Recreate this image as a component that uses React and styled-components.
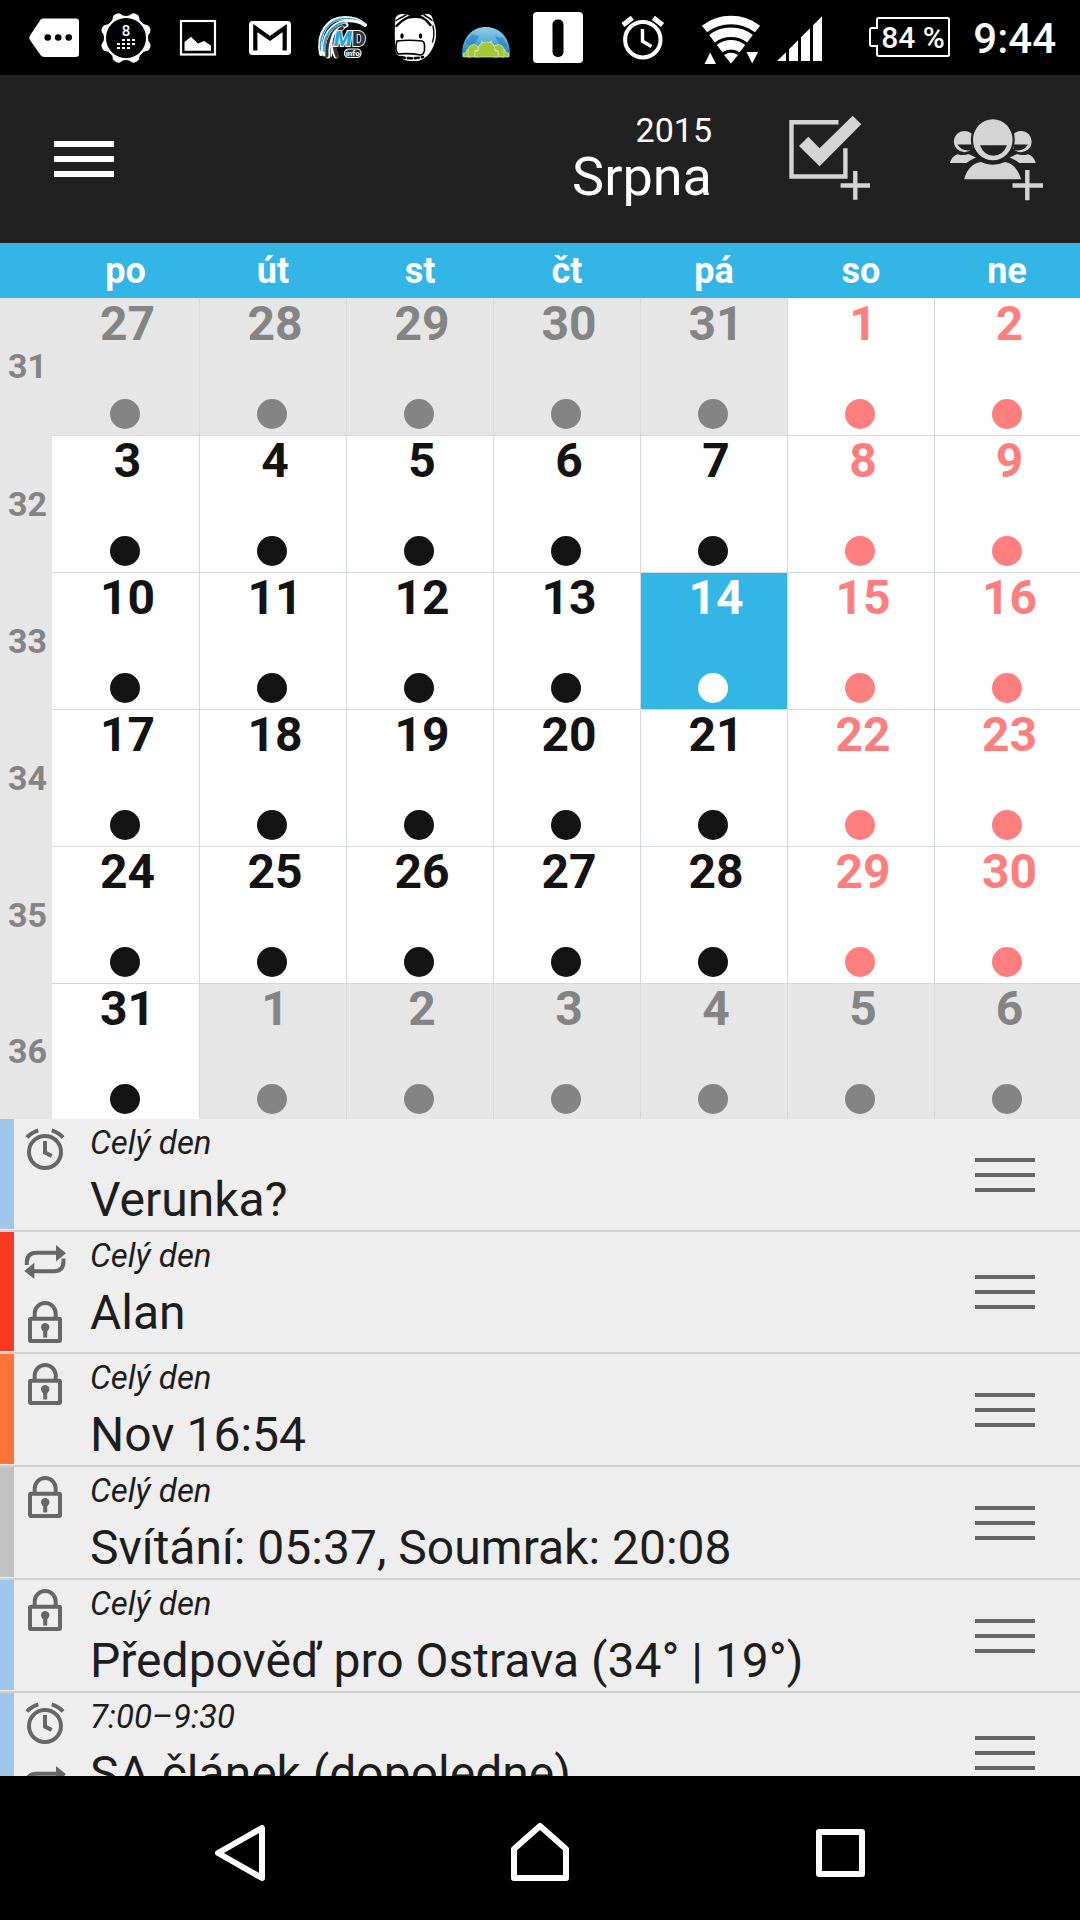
import { useState } from "react";
import styled, { createGlobalStyle } from "styled-components";

const GlobalStyle = createGlobalStyle`
    *{
        box-sizing: border-box;
    }
    body{
        margin: 0;
        background-color: #000;
        font-family: Roboto, 'Liberation Sans', sans-serif;
    }
    button{
        border: 0;
        padding: 0;
        background: none;
        font: inherit;
        color: inherit;
        cursor: pointer;
    }
    svg{
        display: block;
        flex-shrink: 0;
    }
`;

const Screen = styled.div`
    display: flex;
    flex-direction: column;
    height: 100vh;
`;

const StatusBar = styled.div`
    display: flex;
    align-items: center;
    height: 75px;
    padding: 0 24px 0 18px;
    background-color: #000;
    color: #fff;
`;
const Notifications = styled.div`
    display: flex;
    flex: 1;
`;
const Indicators = styled.div`
    display: flex;
    align-items: center;
`;
const Signals = styled.div`
    display: flex;
    margin: 0 38px 0 16px;
`;
const Clock = styled.time`
    margin-left: 22px;
    padding-top: 2px;
    font-size: 42px;
    font-weight: 500;
    line-height: 76px;
`;

const Header = styled.header`
    display: flex;
    align-items: center;
    gap: 72px;
    height: 168px;
    padding: 0 35px 4px 54px;
    background-color: #212121;
    color: #fff;
`;
const MenuButton = styled.button`
    display: flex;
    flex-direction: column;
    gap: 9px;
    width: 60px;
    margin-top: 4px;
`;
const MenuLine = styled.span`
    height: 6px;
    width: 100%;
    background-color: #fff;
`;
const MonthTitle = styled.h1`
    flex: 1;
    margin: 0;
    padding-right: 1px;
    font-size: 54px;
    font-weight: 400;
    line-height: 54px;
    text-align: right;
`;
const Year = styled.span`
    display: block;
    font-size: 34px;
    line-height: 40px;
`;
const HeaderButton = styled.button`
    color: #d4d4d4;
`;

const Calendar = styled.table`
    display: block;
    width: 100%;
`;
const Section = styled.thead`
    display: block;
`;
const WeekRow = styled.tr`
    display: grid;
    grid-template-columns: 52px 148fr repeat(5, 147fr) 145fr;
`;
const WeekDay = styled.th`
    height: 55px;
    padding: 2px 1px 0 0;
    background-color: #33b5e6;
    color: #fff;
    font-size: 36px;
    font-weight: 700;
    line-height: 53px;
    text-align: center;
`;
const WeekNumber = styled.th`
    display: flex;
    align-items: center;
    justify-content: center;
    padding: 0 0 2px 3px;
    background-color: #e6e6e6;
    color: #848484;
    font-size: 34px;
    font-weight: 700;
`;
const colors = {
    out: "#848484",
    work: "#131313",
    weekend: "#ff7f7f",
    selected: "#fff",
};
const DayCell = styled.td`
    padding: 0;
    color: ${p => colors[p.$kind]};
    background-color: ${p => p.$kind === "selected" ? "#33b5e6" : p.$kind === "out" ? "#e6e6e6" : "#fff"};
    border-right: 1px solid #d5dad8;
    border-bottom: 1px solid #d5dad8;
    &:last-child{
        border-right: 0;
    }
    tr:first-child > &{
        padding-top: 1px;
    }
    tr:last-child > &{
        border-bottom: 0;
    }
`;
const DayButton = styled.button`
    display: flex;
    flex-direction: column;
    align-items: center;
    gap: 50px;
    width: 100%;
    padding: 0 2px 6px 0;
    tr:last-child &{
        padding-bottom: 5px;
    }
`;
const DayNumber = styled.span`
    padding-left: 6px;
    font-size: 48px;
    font-weight: 700;
    line-height: 50px;
`;
const Dot = styled.span`
    width: 30px;
    height: 30px;
    border-radius: 50%;
    background-color: currentColor;
`;

const Agenda = styled.ul`
    flex: 1;
    min-height: 0;
    margin: 0;
    padding: 0;
    overflow-y: auto;
    scrollbar-width: none;
    list-style: none;
    background-color: #eee;
    color: #1d1d1d;
`;
const EventRow = styled.li`
    display: flex;
    padding-right: 45px;
    border-bottom: 2px solid #d0d0d0;
`;
const ColorBar = styled.span`
    width: 14px;
    margin-bottom: 1px;
    background-color: ${p => p.$color};
`;
const EventIcons = styled.div`
    width: 62px;
    padding-left: 1px;
    color: #666;
`;
const EventText = styled.div`
    flex: 1;
    padding: 4px 0 1px 14px;
`;
const EventTime = styled.div`
    font-size: 33px;
    font-style: italic;
    line-height: 40px;
`;
const EventTitle = styled.div`
    margin-top: 8px;
    font-size: 48px;
    line-height: 58px;
`;
const Handle = styled.button`
    display: flex;
    flex-direction: column;
    justify-content: center;
    gap: 11px;
    width: 60px;
`;
const HandleLine = styled.span`
    width: 100%;
    height: 4px;
    background-color: #666;
`;

const NavBar = styled.nav`
    display: flex;
    height: 144px;
    padding: 10px 90px 0;
    background-color: #000;
`;
const NavButton = styled.button`
    display: flex;
    flex: 1;
    align-items: center;
    justify-content: center;
`;

// status bar icons share a 72x75 slot
function Slot({ width = 72, children }) {
    return (
        <svg width={width} height="75" viewBox={`0 0 ${width} 75`} fill="#fff" aria-hidden="true">
            {children}
        </svg>
    );
}

function MoreTag() {
    return (
        <Slot>
            <path d="M24 18.5H58Q61 18.5 61 21.5V54Q61 57 58 57H26Q24 57 22.5 55L12 40Q10.5 37.7 12 35.5L22 20.5Q23 18.5 25 18.5Z" />
            <g fill="#000">
                <circle cx="29.7" cy="37.5" r="3.3" />
                <circle cx="40.2" cy="37.5" r="3.3" />
                <circle cx="50.7" cy="37.5" r="3.3" />
            </g>
        </Slot>
    );
}

function CalendarBadge() {
    const lobes = [0, 45, 90, 135, 180, 225, 270, 315];
    const dashes = [[32, 40], [37, 40], [42, 40], [27, 44], [32, 44], [37, 44], [42, 44], [27, 48], [32, 48], [37, 48]];
    return (
        <Slot>
            <circle cx="36" cy="38" r="22" />
            {lobes.map(a => (
                <path key={a} transform={`rotate(${a + 22.5} 36 38)`} d="M27 18Q31 16.5 32 13.5Q33 12 36 12T40 13.5Q41 16.5 45 18L36 30Z" />
            ))}
            <circle cx="36" cy="38" r="20" fill="#000" />
            <text x="36" y="35.7" fontSize="15" fontWeight="500" textAnchor="middle">8</text>
            {dashes.map(([x, y]) => <rect key={x + "-" + y} x={x} y={y - 1} width="3" height="2" />)}
        </Slot>
    );
}

function Picture() {
    return (
        <Slot>
            <rect x="19" y="21" width="34" height="33.5" fill="none" stroke="#fff" strokeWidth="2.2" />
            <path d="M22.5 50.7V42L29 36.8L36 43.5L42 41L49 45.5V50.7Z" />
        </Slot>
    );
}

function Mail() {
    return (
        <Slot>
            <rect x="15" y="21" width="42" height="34" rx="3.5" />
            <path d="M21.3 50.5V28L36 38.5L50.7 28V50.5" fill="none" stroke="#000" strokeWidth="4.2" />
        </Slot>
    );
}

function RoadInfo() {
    return (
        <Slot>
            <g fill="none" strokeLinecap="round">
                <path d="M15 54C11 33 22 18 39 18Q51 18 59 25" stroke="#fff" strokeWidth="4" />
                <path d="M14.5 50C13 32 24 19 38 18.500Q50 18 59 24" stroke="#2aa5dc" strokeWidth="1.5" />
                <path d="M18 55C15 36 25 23 40 21Q50 20 59 25" stroke="#fff" strokeWidth="3" />
                <path d="M18 51C17 36 26 25 38 22.5" stroke="#2aa5dc" strokeWidth="1.8" />
                <path d="M22 56C20 40 26 29 40 25" stroke="#fff" strokeWidth="5" />
                <path d="M21 56C20 40 26 28 39 25" stroke="#333" strokeWidth="3" />
                <path d="M30 56C24 42 27 32 36 28" stroke="#fff" strokeWidth="5" />
                <path d="M31 56C26 43 28 33 36 28" stroke="#333" strokeWidth="3.6" />
                <path d="M25.5 56C24 44 26 35 31 30" stroke="#fff" strokeWidth="1.4" />
            </g>
            <g fontSize="21" fontWeight="900" stroke="#fff" strokeWidth="1.8" paintOrder="stroke">
                <text x="28" y="46" fill="#2aa5dc" fontStyle="italic">M</text>
                <text x="46" y="46" fill="#333">D</text>
            </g>
            <rect x="38.5" y="49" width="16.5" height="8.5" rx="4" fill="#333" stroke="#fff" strokeWidth="1.2" />
            <text x="46.7" y="56" fontSize="8" fontWeight="700" textAnchor="middle">info</text>
        </Slot>
    );
}

function Hippo() {
    return (
        <Slot>
            <path d="M17.500 18Q19 14 25 14Q29 14 32 16H42Q45 14 50 14Q54 14 55 20Q60 31 57 42Q52 58 40 61H31Q24 60 22 56Q17 55 17.500 48Q16 32 17.500 18Z" />
            <g fill="none" stroke="#000" strokeLinecap="round">
                <path d="M18.500 26Q24 20 30 17.500Q37 16 44 17.500Q49 20 52.500 25" strokeWidth="2.4" />
                <path d="M18 20.500Q22 18 28 15M46 15Q50 17 54 20.500" strokeWidth="1.4" />
                <path d="M55 26Q57 35 54.500 42" strokeWidth="1.4" />
                <path d="M19 41Q31 39.500 44 41Q47 42 46.500 47Q47 54 43 55Q31 53 20 54Q16.500 50 19 41Z" strokeWidth="1.6" />
                <path d="M23 57Q33 59.500 45 57" strokeWidth="2.6" strokeDasharray="4 3" />
            </g>
            <g>
                <ellipse cx="24" cy="36" rx="1.7" ry="2.7" fill="#000" />
                <ellipse cx="42.5" cy="36" rx="1.7" ry="2.7" fill="#000" />
            </g>
        </Slot>
    );
}

function AndroidWorld() {
    return (
        <Slot>
            <defs>
                <linearGradient id="globe" x1="0" y1="0" x2="0" y2="1">
                    <stop offset="0" stopColor="#90cfe9" />
                    <stop offset="0.5" stopColor="#55abd8" />
                    <stop offset="1" stopColor="#1976b7" />
                </linearGradient>
            </defs>
            <path d="M12 57C11 38 22 27 36 27S61 38 60 57Z" fill="url(#globe)" />
            <path d="M15 42L22 34L29 36L26 42L20 47ZM45 36L53 38L58 47L50 46Z" fill="#1976b7" opacity="0.5" />
            <g fill="#a4c639" stroke="#e0efad" strokeWidth="0.7">
                <path d="M13.500 57V53H16Q16 48.500 21 48.500V57ZM58.500 57V53H56Q56 48.500 51 48.500V57Z" />
                <path d="M18 57V51Q18 45 24 44.500Q28 45 29 49V57ZM54 57V51Q54 45 48 44.500Q44 45 43 49V57Z" />
                <path d="M25 57V50.500H28Q28 44 33 42.500L31.500 40.500M41.500 40.500L40 42.500Q45 44 45 50.500H48V57" />
                <path d="M25 57V51H28Q28.500 42.500 36.500 42T45 51H48V57Z" />
            </g>
        </Slot>
    );
}

function PillTile() {
    return (
        <Slot>
            <rect x="11" y="12" width="50" height="51" rx="4" />
            <rect x="30.5" y="19.5" width="11" height="37.5" rx="5" fill="#000" />
        </Slot>
    );
}

function StatusAlarm() {
    return (
        <Slot>
            <g fill="none" stroke="#fff">
                <circle cx="35.8" cy="39.7" r="17.7" strokeWidth="4" />
                <path d="M35.5 29V41.3L44.5 46.5" strokeWidth="3.4" />
                <path d="M16 25L25.3 17.7M55.6 25L46.3 17.7" strokeWidth="5" />
            </g>
        </Slot>
    );
}

function Wifi() {
    return (
        <Slot>
            <g fill="none" stroke="#fff">
                <path d="M9.5 29A43.5 43.5 0 0 1 62.5 29" strokeWidth="8.5" />
                <path d="M17 38.7A31.3 31.3 0 0 1 55 38.7" strokeWidth="9.3" />
                <path d="M24.6 48.6A18.8 18.8 0 0 1 47.4 48.6" strokeWidth="9.3" />
            </g>
            <path d="M36 63.5L29 55Q36 50.5 43 55Z" />
            <path d="M9.5 64H21L15.2 52.5ZM51.5 52H63L57.2 63.5Z" />
        </Slot>
    );
}

function CellSignal() {
    return (
        <Slot width={64}>
            <path d="M10 61L19 52.3V61ZM22 61V49.3L31 40.3V61ZM34 61V37.3L43 28.3V61ZM46 61V25.3L55 16.3V61Z" />
        </Slot>
    );
}

function Battery() {
    return (
        <Slot width={82}>
            <path d="M10 18H78.5Q80 18 80 19.5V54.5Q80 56 78.5 56H10Q8 56 8 54.5V46H3Q1 46 1 44.5V29.5Q1 28 3 28H8V19.5Q8 18 10 18Z" fill="none" stroke="#fff" strokeWidth="2" />
            <text x="44" y="47.5" fontSize="30" fontWeight="500" textAnchor="middle">84 %</text>
        </Slot>
    );
}

function AddTaskIcon() {
    return (
        <svg width="88" height="92" viewBox="785 110 88 92" fill="currentColor" aria-hidden="true">
            <path d="M838.5 121.2H791.5V175.5H845.4V147.3" fill="none" stroke="currentColor" strokeWidth="4.4" />
            <path d="M799 145L808.3 135.7L819.6 147.3L852.7 114.7L861.3 123.3L819.6 165.3Z" />
            <path d="M855.3 170V198.7M840.6 184.5H870" stroke="currentColor" strokeWidth="4.4" />
        </svg>
    );
}

function SidePerson() {
    return (
        <>
            <circle cx="964.5" cy="140.6" r="10.6" />
            <path d="M957.5 143.5H972V149Q962 151 957.5 143.5Z" fill="#212121" />
            <path d="M949.8 162Q952 155 957.5 153.2Q964 155 968.5 153L976 156.5Q970 159 966.5 162Z" />
        </>
    );
}

function AddPeopleIcon() {
    return (
        <svg width="100" height="92" viewBox="945 110 100 92" fill="currentColor" aria-hidden="true">
            <SidePerson />
            <g transform="translate(1985.6 0) scale(-1 1)"><SidePerson /></g>
            <ellipse cx="992.8" cy="138.8" rx="22" ry="23" fill="#212121" />
            <ellipse cx="992.8" cy="138.8" rx="19.8" ry="20.5" />
            <path d="M980 144.3H1007Q1003 154.7 993.5 154.7T980 144.3Z" fill="#212121" />
            <path d="M964.2 178.3C966 170 972 162 980.8 161Q992.8 166.5 1005 161C1013 162 1019 170 1021 178.3Z" />
            <path d="M1027.3 169V199.3M1012.5 184.5H1043" stroke="currentColor" strokeWidth="4.4" />
        </svg>
    );
}

function EventIcon({ name }) {
    return (
        <svg width="60" height="60" viewBox="0 0 60 60" fill="none" stroke="currentColor" strokeWidth="4" aria-hidden="true">
            {name === "alarm" && (
                <>
                    <circle cx="30" cy="33" r="16" />
                    <path d="M30 22V33.5L36.7 37" />
                    <path d="M12 18.5Q16 13.5 23.3 11.3M48 18.5Q44 13.5 36.7 11.3" />
                </>
            )}
            {name === "repeat" && (
                <>
                    <path d="M11.8 33V31Q11.8 20.7 21.5 20.7H42M48.5 26.5V29Q48.5 39.3 39 39.3H18" />
                    <path d="M41 13L51 21.3L41 29.5ZM19.3 30.7L9.3 39L19.3 47Z" fill="currentColor" stroke="none" />
                </>
            )}
            {name === "lock" && (
                <>
                    <rect x="15" y="26.7" width="30" height="22.3" rx="1" />
                    <path d="M19.7 26V21.5A10.5 10.5 0 0 1 40.7 21.5V26" />
                    <circle cx="30.2" cy="35.3" r="4.2" fill="currentColor" stroke="none" />
                    <path d="M30.2 36V45.5" />
                </>
            )}
        </svg>
    );
}

function NavIcon({ children }) {
    return (
        <svg width="60" height="64" viewBox="0 0 60 64" fill="none" stroke="#fff" strokeWidth="6" strokeLinejoin="round" aria-hidden="true">
            {children}
        </svg>
    );
}

const weekDays = ["po", "út", "st", "čt", "pá", "so", "ne"];

const weeks = [
    { number: 31, days: [27, 28, 29, 30, 31, 1, 2] },
    { number: 32, days: [3, 4, 5, 6, 7, 8, 9] },
    { number: 33, days: [10, 11, 12, 13, 14, 15, 16] },
    { number: 34, days: [17, 18, 19, 20, 21, 22, 23] },
    { number: 35, days: [24, 25, 26, 27, 28, 29, 30] },
    { number: 36, days: [31, 1, 2, 3, 4, 5, 6] },
];

const events = [
    { time: "Celý den", title: "Verunka?", color: "#9fc5e8", icons: ["alarm"] },
    { time: "Celý den", title: "Alan", color: "#f83a22", icons: ["repeat", "lock"] },
    { time: "Celý den", title: "Nov 16:54", color: "#ff7537", icons: ["lock"] },
    { time: "Celý den", title: "Svítání: 05:37, Soumrak: 20:08", color: "#c2c2c2", icons: ["lock"] },
    { time: "Celý den", title: "Předpověď pro Ostrava (34° | 19°)", color: "#9fc5e8", icons: ["lock"] },
    { time: "7:00–9:30", title: "SA článek (dopoledne)", color: "#9fc5e8", icons: ["alarm", "repeat"] },
];

function dayKind(week, column, day, selected) {
    if ((week === 0 && day > 20) || (week === 5 && day < 20)) return "out";
    if (day === selected) return "selected";
    return column > 4 ? "weekend" : "work";
}

export default function App() {
    const [selected, setSelected] = useState(14);
    return (
        <Screen>
            <GlobalStyle />
            <StatusBar>
                <Notifications>
                    <MoreTag />
                    <CalendarBadge />
                    <Picture />
                    <Mail />
                    <RoadInfo />
                    <Hippo />
                    <AndroidWorld />
                    <PillTile />
                </Notifications>
                <Indicators>
                    <StatusAlarm />
                    <Signals>
                        <Wifi />
                        <CellSignal />
                    </Signals>
                    <Battery />
                    <Clock>9:44</Clock>
                </Indicators>
            </StatusBar>

            <Header>
                <MenuButton aria-label="Menu">
                    <MenuLine />
                    <MenuLine />
                    <MenuLine />
                </MenuButton>
                <MonthTitle><Year>2015</Year>Srpna</MonthTitle>
                <HeaderButton aria-label="Nový úkol"><AddTaskIcon /></HeaderButton>
                <HeaderButton aria-label="Nová schůzka"><AddPeopleIcon /></HeaderButton>
            </Header>

            <Calendar>
                <Section>
                    <WeekRow>
                        <WeekDay as="td" />
                        {weekDays.map(d => <WeekDay key={d} scope="col">{d}</WeekDay>)}
                    </WeekRow>
                </Section>
                <Section as="tbody">
                    {weeks.map((week, w) => (
                        <WeekRow key={week.number}>
                            <WeekNumber scope="row">{week.number}</WeekNumber>
                            {week.days.map((day, i) => (
                                <DayCell key={day} $kind={dayKind(w, i, day, selected)}>
                                    <DayButton onClick={() => setSelected(day)}>
                                        <DayNumber>{day}</DayNumber>
                                        <Dot />
                                    </DayButton>
                                </DayCell>
                            ))}
                        </WeekRow>
                    ))}
                </Section>
            </Calendar>

            <Agenda>
                {events.map(event => (
                    <EventRow key={event.title}>
                        <ColorBar $color={event.color} />
                        <EventIcons>
                            {event.icons.map(name => <EventIcon key={name} name={name} />)}
                        </EventIcons>
                        <EventText>
                            <EventTime>{event.time}</EventTime>
                            <EventTitle>{event.title}</EventTitle>
                        </EventText>
                        <Handle aria-label={"Možnosti: " + event.title}>
                            <HandleLine />
                            <HandleLine />
                            <HandleLine />
                        </Handle>
                    </EventRow>
                ))}
            </Agenda>

            <NavBar>
                <NavButton aria-label="Zpět">
                    <NavIcon><path d="M52 7V57L8 32Z" /></NavIcon>
                </NavButton>
                <NavButton aria-label="Domů">
                    <NavIcon><path d="M4 57V28L30 5L56 28V57Z" /></NavIcon>
                </NavButton>
                <NavButton aria-label="Poslední aplikace">
                    <NavIcon><rect x="9" y="11" width="43" height="42" /></NavIcon>
                </NavButton>
            </NavBar>
        </Screen>
    );
}
